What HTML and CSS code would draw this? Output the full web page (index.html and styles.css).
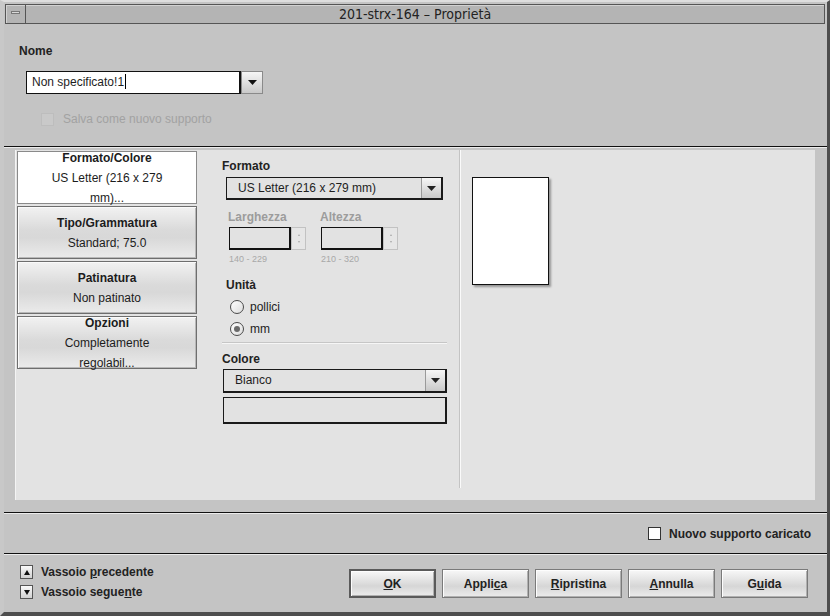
FILE: index.html
```html
<!DOCTYPE html>
<html lang="it">
<head>
    <meta charset="UTF-8">
    <title>201-strx-164 - Proprietà</title>
    <link rel="stylesheet" href="styles.css">
</head>
<body>

<div class="window">
    <div class="titlebar">
        <div class="menu-btn"><span></span></div>
        <div class="title">201-strx-164 – Proprietà</div>
    </div>

    <div class="name-section">
        <div class="label">Nome</div>
        <div class="name-combo">
            <div class="name-field">Non specificato!1<span class="caret"></span></div>
            <div class="drop-btn">
                <svg width="9" height="5" viewBox="0 0 9 5"><polygon points="0,0 9,0 4.5,5" fill="#111"/></svg>
            </div>
        </div>
        <div class="check disabled">
            <span class="box"></span>
            <span>Salva come nuovo supporto</span>
        </div>
    </div>

    <div class="sep"></div>

    <div class="panel">
        <div class="tabs">
            <div class="tab selected">
                <b>Formato/Colore</b>
                <span>US Letter (216 x 279</span>
                <span>mm)...</span>
            </div>
            <div class="tab">
                <b>Tipo/Grammatura</b>
                <span>Standard; 75.0</span>
            </div>
            <div class="tab">
                <b>Patinatura</b>
                <span>Non patinato</span>
            </div>
            <div class="tab">
                <b>Opzioni</b>
                <span>Completamente</span>
                <span>regolabil...</span>
            </div>
        </div>

        <div class="form">
            <div class="label">Formato</div>
            <div class="combo size-combo">
                <div class="combo-text">US Letter (216 x 279 mm)</div>
                <div class="drop-btn">
                    <svg width="9" height="5" viewBox="0 0 9 5"><polygon points="0,0 9,0 4.5,5" fill="#222"/></svg>
                </div>
            </div>

            <div class="dim-row">
                <div class="dim">
                    <div class="label muted">Larghezza</div>
                    <div class="spinner">
                        <div class="spin-field"></div>
                        <div class="spin-arrows"><i class="up"></i><i class="down"></i></div>
                    </div>
                    <div class="range">140 - 229</div>
                </div>
                <div class="dim">
                    <div class="label muted">Altezza</div>
                    <div class="spinner">
                        <div class="spin-field"></div>
                        <div class="spin-arrows"><i class="up"></i><i class="down"></i></div>
                    </div>
                    <div class="range">210 - 320</div>
                </div>
            </div>

            <div class="label units-label">Unità</div>
            <div class="radio"><span class="dot"></span><span>pollici</span></div>
            <div class="radio"><span class="dot on"></span><span>mm</span></div>

            <div class="hline"></div>

            <div class="label">Colore</div>
            <div class="combo color-combo">
                <div class="combo-text">Bianco</div>
                <div class="drop-btn">
                    <svg width="9" height="5" viewBox="0 0 9 5"><polygon points="0,0 9,0 4.5,5" fill="#222"/></svg>
                </div>
            </div>
            <div class="color-box"></div>
        </div>

        <div class="vsep"></div>

        <div class="preview">
            <div class="sheet"></div>
        </div>
    </div>

    <div class="sep"></div>

    <div class="loaded-row">
        <div class="check">
            <span class="box white"></span>
            <span>Nuovo supporto caricato</span>
        </div>
    </div>

    <div class="sep"></div>

    <div class="footer">
        <div class="tray-nav">
            <div class="tray"><span class="arrow-btn"><i class="up"></i></span><span>Vassoio <u>p</u>recedente</span></div>
            <div class="tray"><span class="arrow-btn"><i class="down"></i></span><span>Vassoio segue<u>n</u>te</span></div>
        </div>
        <div class="buttons">
            <button class="default"><u>O</u>K</button>
            <button>Appli<u>c</u>a</button>
            <button><u>R</u>ipristina</button>
            <button><u>A</u>nnulla</button>
            <button>G<u>u</u>ida</button>
        </div>
    </div>
</div>

</body>
</html>
```

FILE: styles.css
```css
body {
    margin: 0;
    padding: 0;
    font-family: "Liberation Sans", Arial, sans-serif;
    font-size: 12px;
    color: #1e1e1e;
    background: #c4c4c4;
}

.window {
    width: 830px;
    height: 616px;
    box-sizing: border-box;
    display: flex;
    flex-direction: column;
    background: #c4c4c4;
    border-top: 2px solid #dedede;
    border-left: 4px solid #c8c8c8;
    border-right: 3px solid #4e4e4e;
    border-bottom: 4px solid #4e4e4e;
    overflow: hidden;
}

/* barra del titolo */
.titlebar {
    height: 20px;
    box-sizing: border-box;
    margin: 2px 2px 0 1px;
    display: flex;
    background: #b4b4b4;
    border: 1px solid #555;
    box-shadow: inset 1px 1px 0 #d2d2d2;
}
.menu-btn {
    width: 19px;
    border-right: 1px solid #555;
    display: flex;
    align-items: center;
    justify-content: center;
}
.menu-btn span {
    display: block;
    width: 9px;
    height: 3px;
    margin-top: -4px;
    background: #d8d8d8;
    border: 1px solid #777;
    box-sizing: border-box;
}
.title {
    flex: 1;
    text-align: center;
    font-family: "DejaVu Sans Condensed", "Liberation Sans", sans-serif;
    font-size: 14px;
    line-height: 18px;
    color: #222;
    padding-right: 20px;
}

.label {
    font-weight: bold;
    line-height: 16px;
    color: #222;
}
.label.muted {
    color: #9c9c9c;
}

/* sezione nome */
.name-section {
    height: 122px;
    box-sizing: border-box;
    padding: 19px 0 0 15px;
}
.name-combo {
    display: flex;
    margin: 12px 0 0 7px;
    height: 23px;
}
.name-field {
    width: 215px;
    box-sizing: border-box;
    background: #fff;
    border: 1px solid #111;
    border-right-width: 2px;
    padding-left: 5px;
    line-height: 21px;
    font-size: 12px;
}
.caret {
    display: inline-block;
    width: 1px;
    height: 15px;
    background: #000;
    vertical-align: -3px;
    margin-left: 1px;
}
.drop-btn {
    width: 22px;
    box-sizing: border-box;
    display: flex;
    align-items: center;
    justify-content: center;
    background: linear-gradient(#f6f6f6, #c9c9c9);
    border: 1px solid #8a8a8a;
}

.check {
    display: flex;
    align-items: center;
    gap: 9px;
    line-height: 16px;
}
.check.disabled {
    margin: 17px 0 0 22px;
    color: #a2a2a2;
}
.check .box {
    width: 13px;
    height: 13px;
    box-sizing: border-box;
    border: 1px solid #bdbdbd;
    background: #c9c9c9;
}
.check .box.white {
    background: #fff;
    border: 1px solid #333;
}

.sep {
    height: 2px;
    box-sizing: border-box;
    border-top: 1px solid #111;
    border-bottom: 1px solid #ececec;
}

/* pannello centrale */
.panel {
    margin: 2px 0 12px 11px;
    width: 800px;
    height: 350px;
    box-sizing: border-box;
    background: #e3e3e3;
    border-left: 1px solid #f4f4f4;
    padding: 1px 0 0 1px;
    display: flex;
    align-items: flex-start;
}

.tabs {
    width: 180px;
    display: flex;
    flex-direction: column;
    gap: 2px;
}
.tab {
    height: 53px;
    box-sizing: border-box;
    border: 1px solid #6e6e6e;
    box-shadow: inset 1px 1px 0 #fafafa, inset -1px -1px 0 #b8b8b8;
    background: linear-gradient(#f2f2f2, #dadada 45%, #d8d8d8 60%, #ebebeb);
    display: flex;
    flex-direction: column;
    align-items: center;
    justify-content: center;
    line-height: 20px;
    color: #1c1c1c;
}
.tab.selected {
    background: #fff;
    box-shadow: none;
    border-color: #8a8a8a;
}

.form {
    width: 225px;
    margin-left: 25px;
    padding-top: 7px;
}
.combo {
    display: flex;
    box-sizing: border-box;
    border: 1px solid #1a1a1a;
    border-width: 1px 2px 2px 1px;
    background: #e2e2e2;
}
.combo .drop-btn {
    width: 20px;
    border: 1px solid #9a9a9a;
    border-width: 0 0 0 1px;
}
.combo-text {
    flex: 1;
    padding-left: 11px;
    line-height: 20px;
}
.size-combo {
    margin: 3px 0 0 4px;
    width: 217px;
    height: 23px;
}

.dim-row {
    display: flex;
    margin: 9px 0 0 6px;
}
.dim {
    width: 92px;
}
.spinner {
    display: flex;
    margin: 2px 0 0 1px;
    height: 23px;
}
.spin-field {
    width: 62px;
    box-sizing: border-box;
    border: 1px solid #111;
    border-width: 1px 2px 2px 1px;
    background: #e2e2e2;
}
.spin-arrows {
    width: 15px;
    box-sizing: border-box;
    border: 1px solid #c2c2c2;
    background: #e6e6e6;
    display: flex;
    flex-direction: column;
    align-items: center;
    justify-content: center;
    gap: 5px;
}
.spin-arrows i {
    width: 0;
    height: 0;
    border-left: 1.5px solid transparent;
    border-right: 1.5px solid transparent;
}
.spin-arrows .up {
    border-bottom: 2px solid #a8a8a8;
}
.spin-arrows .down {
    border-top: 2px solid #a8a8a8;
}
.range {
    margin: 3px 0 0 1px;
    font-size: 9px;
    line-height: 12px;
    color: #a8a8a8;
}

.units-label {
    margin: 12px 0 0 4px;
}
.radio {
    display: flex;
    align-items: center;
    height: 22px;
    margin-left: 8px;
    gap: 6px;
    color: #222;
}
.units-label + .radio {
    margin-top: 3px;
}
.radio .dot {
    width: 14px;
    height: 14px;
    box-sizing: border-box;
    border-radius: 50%;
    border: 1px solid #4a4a4a;
    background: linear-gradient(135deg, #ffffff, #dcdcdc);
    display: flex;
    align-items: center;
    justify-content: center;
}
.radio .dot.on::after {
    content: "";
    width: 6px;
    height: 6px;
    border-radius: 50%;
    background: #6a6a6a;
}

.hline {
    height: 2px;
    box-sizing: border-box;
    margin-top: 2px;
    border-top: 1px solid #c6c6c6;
    border-bottom: 1px solid #f6f6f6;
}
.hline + .label {
    margin-top: 7px;
}
.color-combo {
    margin: 2px 0 0 1px;
    width: 224px;
    height: 24px;
}
.color-box {
    margin: 4px 0 0 1px;
    width: 224px;
    height: 27px;
    box-sizing: border-box;
    border: 1px solid #1a1a1a;
    border-width: 1px 2px 2px 1px;
    background: #e2e2e2;
}

.vsep {
    width: 2px;
    height: 338px;
    margin: -1px 0 0 12px;
    box-sizing: border-box;
    border-left: 1px solid #c4c4c4;
    border-right: 1px solid #fafafa;
}

.preview {
    margin-left: 11px;
    padding-top: 26px;
}
.sheet {
    width: 77px;
    height: 108px;
    box-sizing: border-box;
    background: #fff;
    border: 1px solid #111;
    box-shadow: 2px 2px 2px rgba(0, 0, 0, 0.35);
}

/* riga supporto caricato */
.loaded-row {
    height: 39px;
    display: flex;
    align-items: center;
    justify-content: flex-end;
    padding-right: 16px;
}
.loaded-row .check {
    gap: 8px;
    font-weight: bold;
    color: #222;
}

/* pulsanti in basso */
.footer {
    flex: 1;
    display: flex;
    justify-content: space-between;
    align-items: flex-start;
    padding: 7px 19px 0 16px;
}
.tray {
    display: flex;
    align-items: center;
    gap: 8px;
    height: 20px;
    font-weight: bold;
    color: #222;
}
.arrow-btn {
    width: 13px;
    height: 14px;
    box-sizing: border-box;
    border: 1px solid #555;
    background: linear-gradient(#fafafa, #d0d0d0);
    display: flex;
    align-items: center;
    justify-content: center;
}
.arrow-btn i {
    width: 0;
    height: 0;
    border-left: 3.5px solid transparent;
    border-right: 3.5px solid transparent;
}
.arrow-btn .up {
    border-bottom: 5px solid #111;
}
.arrow-btn .down {
    border-top: 5px solid #111;
}

.buttons {
    display: flex;
    gap: 6px;
    margin-top: 7px;
}
.buttons button {
    width: 87px;
    height: 29px;
    font-family: "Liberation Sans", Arial, sans-serif;
    font-size: 12px;
    font-weight: bold;
    color: #222;
    border: 1px solid #7a7a7a;
    box-shadow: inset 1px 1px 0 #fdfdfd, inset -1px -1px 0 #b0b0b0;
    background: linear-gradient(#f8f8f8, #dcdcdc 50%, #d6d6d6 60%, #ececec);
    padding: 0;
}
.buttons button.default {
    border: 2px solid #5a5a5a;
}
```
